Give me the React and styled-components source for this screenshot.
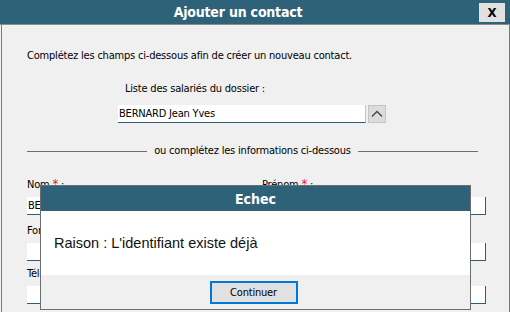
import React from 'react';
import styled, { createGlobalStyle } from 'styled-components';

const UI_FONT = `'DejaVu Sans Condensed', 'DejaVu Sans', 'Liberation Sans', sans-serif`;

const Global = createGlobalStyle`
    html, body {
        margin: 0;
        padding: 0;
        background: #f0f0f0;
    }
    * {
        box-sizing: border-box;
    }
`;

export default () => {
    return (
        <Screen>
            <Global />
            <Window>
                <TitleBar>
                    <Title>Ajouter un contact</Title>
                    <CloseButton>X</CloseButton>
                </TitleBar>
                <Body>
                    <Intro>Complétez les champs ci-dessous afin de créer un nouveau contact.</Intro>
                    <PickLabel>Liste des salariés du dossier :</PickLabel>
                    <PickRow>
                        <PickInput>BERNARD Jean Yves</PickInput>
                        <ArrowButton>
                            <svg width="12" height="8" viewBox="0 0 12 8">
                                <path d="M1 6.5 L6 1.5 L11 6.5" fill="none" stroke="#444" strokeWidth="1.3" />
                            </svg>
                        </ArrowButton>
                    </PickRow>
                    <Divider>
                        <Rule />
                        <span>ou complétez les informations ci-dessous</span>
                        <Rule />
                    </Divider>
                    <Form>
                        <Field top={19}>
                            <Label>
                                Nom <Star>*</Star> :
                            </Label>
                            <Input>BERNARD</Input>
                        </Field>
                        <Field top={19}>
                            <Label>
                                Prénom <Star>*</Star> :
                            </Label>
                            <Input>Jean Yves</Input>
                        </Field>
                        <Field top={9}>
                            <Label>Fonction :</Label>
                            <Input />
                        </Field>
                        <Field top={9}>
                            <Label>Service :</Label>
                            <Input />
                        </Field>
                        <Field top={6}>
                            <Label>Téléphone :</Label>
                            <Input />
                        </Field>
                        <Field top={6}>
                            <Label>Email :</Label>
                            <Input />
                        </Field>
                    </Form>
                </Body>
            </Window>

            <Dialog>
                <DialogTitle>Echec</DialogTitle>
                <DialogBody>Raison : L'identifiant existe déjà</DialogBody>
                <DialogFooter>
                    <PrimaryButton>Continuer</PrimaryButton>
                </DialogFooter>
            </Dialog>
        </Screen>
    );
};

const Screen = styled.div`
    position: relative;
    width: 510px;
    height: 312px;
    overflow: hidden;
    background: #f0f0f0;
    font-family: ${UI_FONT};
`;

const Window = styled.div`
    display: flex;
    flex-direction: column;
    width: 510px;
    height: 330px;
`;

const TitleBar = styled.div`
    position: relative;
    display: flex;
    align-items: center;
    justify-content: center;
    height: 25px;
    background: #2e6279;
    border-bottom: 1px solid #8c8c8c;
`;

const Title = styled.div`
    color: #fff;
    font-weight: bold;
    font-size: 14px;
    letter-spacing: -0.2px;
    margin-left: -34px;
`;

const CloseButton = styled.div`
    position: absolute;
    right: 5px;
    top: 3px;
    width: 26px;
    height: 19px;
    display: flex;
    align-items: center;
    justify-content: center;
    background: #e1e1e1;
    color: #000;
    font-weight: bold;
    font-size: 13px;
`;

const Body = styled.div`
    flex: 1;
    border-left: 1px solid #7a7a7a;
    border-right: 1px solid #7a7a7a;
    margin-left: 1px;
    padding: 24px 22px 0 25px;
    font-size: 11px;
    letter-spacing: -0.2px;
    color: #000;
`;

const Intro = styled.div`
    line-height: 14px;
`;

const PickLabel = styled.div`
    margin-top: 19px;
    margin-left: 98px;
    line-height: 14px;
`;

const PickRow = styled.div`
    display: flex;
    align-items: stretch;
    gap: 2px;
    margin-top: 9px;
    margin-left: 91px;
    height: 18px;
`;

const PickInput = styled.div`
    width: 248px;
    background: #fff;
    border-bottom: 1px solid #2e5d79;
    border-right: 1px solid #b8c8d4;
    padding-left: 1px;
    line-height: 17px;
`;

const ArrowButton = styled.div`
    width: 18px;
    display: flex;
    align-items: center;
    justify-content: center;
    background: #dcdcdc;
    border: 1px solid #c4c4c4;
`;

const Divider = styled.div`
    display: flex;
    align-items: center;
    gap: 7px;
    margin-top: 21px;
    width: 451px;
    line-height: 14px;
    white-space: nowrap;
`;

const Rule = styled.div`
    flex: 1;
    height: 1px;
    background: #6e6e6e;
`;

const Form = styled.div`
    display: grid;
    grid-template-columns: 224px 224px;
    column-gap: 11px;
`;

const Field = styled.div`
    display: flex;
    flex-direction: column;
    gap: 5px;
    margin-top: ${({ top }) => top}px;
`;

const Label = styled.div`
    line-height: 14px;
`;

const Star = styled.span`
    color: #e02020;
    font-size: 13px;
`;

const Input = styled.div`
    height: 18px;
    background: #fff;
    border-bottom: 1px solid #2e5d79;
    border-right: 1px solid #2e5d79;
    line-height: 17px;
    padding-left: 1px;
`;

const Dialog = styled.div`
    position: absolute;
    left: 40px;
    top: 185px;
    width: 431px;
    height: 125px;
    display: flex;
    flex-direction: column;
    border: 1px solid #6d6d6d;
    background: #f0f0f0;
`;

const DialogTitle = styled.div`
    height: 25px;
    display: flex;
    align-items: center;
    justify-content: center;
    background: #2e6279;
    color: #fff;
    font-weight: bold;
    font-size: 14px;
`;

const DialogBody = styled.div`
    height: 64px;
    display: flex;
    align-items: center;
    padding-left: 13px;
    background: #fff;
    font-family: 'Liberation Sans', Arial, sans-serif;
    font-size: 14.5px;
    color: #111;
`;

const DialogFooter = styled.div`
    flex: 1;
    display: flex;
    align-items: center;
    justify-content: center;
    padding-right: 4px;
`;

const PrimaryButton = styled.div`
    width: 88px;
    height: 23px;
    display: flex;
    align-items: center;
    justify-content: center;
    background: #e1e1e1;
    border: 2px solid #0078d7;
    font-size: 11px;
    letter-spacing: -0.2px;
    color: #000;
`;
